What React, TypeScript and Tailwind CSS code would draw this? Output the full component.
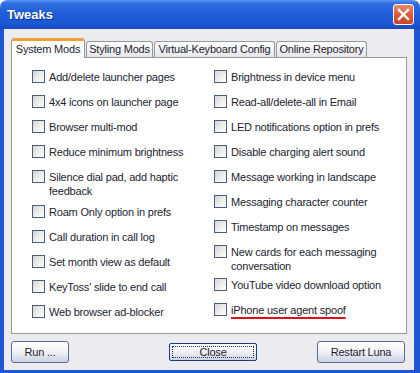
import React from 'react';

type Item = { lines: string[]; h: number; mark?: boolean };

const leftItems: Item[] = [
    { lines: ['Add/delete launcher pages'], h: 25 },
    { lines: ['4x4 icons on launcher page'], h: 25 },
    { lines: ['Browser multi-mod'], h: 25 },
    { lines: ['Reduce minimum brightness'], h: 25 },
    { lines: ['Silence dial pad, add haptic', 'feedback'], h: 35 },
    { lines: ['Roam Only option in prefs'], h: 25 },
    { lines: ['Call duration in call log'], h: 25 },
    { lines: ['Set month view as default'], h: 25 },
    { lines: ["KeyToss' slide to end call"], h: 25 },
    { lines: ['Web browser ad-blocker'], h: 25 },
];

const rightItems: Item[] = [
    { lines: ['Brightness in device menu'], h: 25 },
    { lines: ['Read-all/delete-all in Email'], h: 25 },
    { lines: ['LED notifications option in prefs'], h: 25 },
    { lines: ['Disable charging alert sound'], h: 25 },
    { lines: ['Message working in landscape'], h: 25 },
    { lines: ['Messaging character counter'], h: 25 },
    { lines: ['Timestamp on messages'], h: 25 },
    { lines: ['New cards for each messaging', 'conversation'], h: 33 },
    { lines: ['YouTube video download option'], h: 25 },
    { lines: ['iPhone user agent spoof'], h: 25, mark: true },
];

const CheckRow: React.FC<{ item: Item }> = ({ item }) => (
    <div className={`flex items-start gap-[4px] ${item.h === 35 ? 'h-[35px]' : item.h === 33 ? 'h-[33px]' : 'h-[25px]'}`}>
        <div className="w-[13px] h-[13px] shrink-0 border border-[#4a5d7a] bg-gradient-to-br from-[#d4d4d2] via-[#ececea] to-white" />
        <div className="leading-[14px] whitespace-nowrap text-[#1d1d30]">
            {item.lines.map((l, i) => (
                <div key={i}>
                    {item.mark ? (
                        <span className="underline decoration-[#e0101a] decoration-2 underline-offset-[3px]">{l}</span>
                    ) : l}
                </div>
            ))}
        </div>
    </div>
);

const App: React.FC = () => {
    const tabs = [
        { name: 'Styling Mods', w: 'w-[67px]' },
        { name: 'Virtual-Keyboard Config', w: 'w-[121px]' },
        { name: 'Online Repository', w: 'w-[91px]' },
    ];

    return (
        <div className="w-[420px] h-[373px] flex flex-col overflow-hidden font-['Liberation_Sans',Arial,sans-serif] text-[11px] tracking-[-0.2px]">
            {/* title bar */}
            <div className="h-[29px] shrink-0 flex items-center justify-between rounded-t-[7px] pl-[7px] pr-[6px] bg-[linear-gradient(to_bottom,#5a98f2_0%,#2f6ee0_12%,#215ed9_45%,#1d58d4_80%,#1848c0_100%)]">
                <span className="text-white font-bold text-[13px] tracking-normal [text-shadow:1px_1px_0_#0c2f8a]">Tweaks</span>
                <button className="w-[21px] h-[21px] rounded-[3px] border border-white bg-gradient-to-b from-[#ea8a6c] via-[#dd5a38] to-[#c8452a] flex items-center justify-center">
                    <svg width="13" height="13" viewBox="0 0 13 13">
                        <path d="M2 2 L11 11 M11 2 L2 11" stroke="white" strokeWidth="2.4" strokeLinecap="square" />
                    </svg>
                </button>
            </div>

            {/* window body */}
            <div className="flex-1 flex flex-col bg-[#ecebf0] border-l-[4px] border-r-[6px] border-b-[3px] border-[#1f56d4] pl-[7px] pr-[7px] pt-[9px] pb-[7px]">
                <div className="flex items-end h-[19px]">
                    <div className="relative z-10 -mb-px w-[74px] h-[20px] bg-white border-x border-[#919b9c] border-t-[3px] border-t-[#f0a038] rounded-t-[3px] flex items-center justify-center text-[#1d1d30]">
                        System Mods
                    </div>
                    {tabs.map((t) => (
                        <div key={t.name} className={`${t.w} h-[16px] ml-px border-x border-t border-[#919b9c] rounded-t-[3px] bg-gradient-to-b from-white to-[#e6e6ec] flex items-center justify-center text-[#1d1d30] whitespace-nowrap`}>
                            {t.name}
                        </div>
                    ))}
                </div>

                <div className="h-[277px] shrink-0 bg-white border border-[#919b9c] pl-[20px] pt-[12px] grid grid-cols-[182px_1fr]">
                    <div className="flex flex-col">
                        {leftItems.map((it, i) => <CheckRow key={i} item={it} />)}
                    </div>
                    <div className="flex flex-col">
                        {rightItems.map((it, i) => <CheckRow key={i} item={it} />)}
                    </div>
                </div>

                <div className="flex items-center h-[22px] mt-[7px]">
                    <button className="w-[58px] h-[22px] rounded-[3px] border border-[#5b6d92] bg-gradient-to-b from-white via-[#f0f1f6] to-[#ccd2e2] text-[#1d1d30]">
                        Run ...
                    </button>
                    <button className="ml-[100px] w-[88px] h-[18px] rounded-[2px] border border-[#1b3a86] bg-gradient-to-b from-white via-[#eef0f7] to-[#cdd4e6] text-[#1d1d30] p-[2px]">
                        <div className="w-full h-full border border-dotted border-[#333] flex items-center justify-center leading-none">Close</div>
                    </button>
                    <button className="ml-auto mr-[2px] w-[88px] h-[22px] rounded-[3px] border border-[#5b6d92] bg-gradient-to-b from-white via-[#f0f1f6] to-[#ccd2e2] text-[#1d1d30]">
                        Restart Luna
                    </button>
                </div>
            </div>
        </div>
    );
};

export default App;
